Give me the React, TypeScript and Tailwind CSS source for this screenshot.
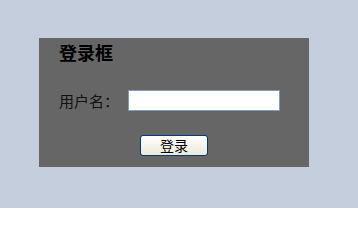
import React from 'react';

export default function App() {
  return (
    <div className="w-[358px] h-[208px] bg-[#c5cedc] pt-[38px] pl-[39px]" style={{ fontFamily: '"Noto Sans CJK SC", "Liberation Sans", sans-serif' }}>
      <div className="w-[270px] h-[129px] bg-[#666666] pl-[20px] pt-[2px]">
        <h1 className="text-[18px] font-bold leading-[24px] text-black">登录框</h1>
        <div className="flex items-center mt-[26px]">
          <label className="text-[15px] leading-[20px] text-[#111] w-[69px]">用户名：</label>
          <input type="text" className="w-[152px] h-[21px] bg-white border border-[#7f9db9] outline-none" />
        </div>
        <div className="mt-[21px] pl-[81px]">
          <button className="w-[68px] h-[21px] rounded-[3px] border border-[#003c74] bg-gradient-to-b from-white to-[#ece9d8] text-[14px] leading-[18px] text-black">
            登录
          </button>
        </div>
      </div>
    </div>
  );
}
